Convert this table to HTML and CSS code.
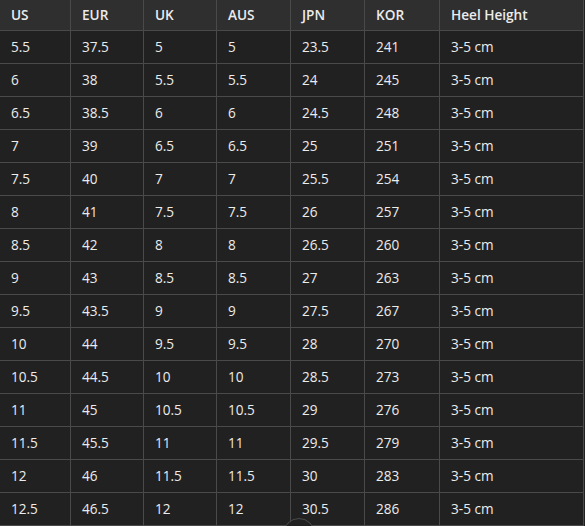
FILE: index.html
```html
<!DOCTYPE html>
<html>
<head>
<meta charset="utf-8">
<link rel="stylesheet" href="styles.css">
</head>
<body>
<div class="wrap">
<table class="sizes">
<colgroup>
<col class="c1"><col class="c2"><col class="c3"><col class="c4"><col class="c5"><col class="c6"><col class="c7">
</colgroup>
<thead>
<tr><th>US</th><th>EUR</th><th>UK</th><th>AUS</th><th>JPN</th><th>KOR</th><th>Heel Height</th></tr>
</thead>
<tbody>
<tr><td>5.5</td><td>37.5</td><td>5</td><td>5</td><td>23.5</td><td>241</td><td>3-5 cm</td></tr>
<tr><td>6</td><td>38</td><td>5.5</td><td>5.5</td><td>24</td><td>245</td><td>3-5 cm</td></tr>
<tr><td>6.5</td><td>38.5</td><td>6</td><td>6</td><td>24.5</td><td>248</td><td>3-5 cm</td></tr>
<tr><td>7</td><td>39</td><td>6.5</td><td>6.5</td><td>25</td><td>251</td><td>3-5 cm</td></tr>
<tr><td>7.5</td><td>40</td><td>7</td><td>7</td><td>25.5</td><td>254</td><td>3-5 cm</td></tr>
<tr><td>8</td><td>41</td><td>7.5</td><td>7.5</td><td>26</td><td>257</td><td>3-5 cm</td></tr>
<tr><td>8.5</td><td>42</td><td>8</td><td>8</td><td>26.5</td><td>260</td><td>3-5 cm</td></tr>
<tr><td>9</td><td>43</td><td>8.5</td><td>8.5</td><td>27</td><td>263</td><td>3-5 cm</td></tr>
<tr><td>9.5</td><td>43.5</td><td>9</td><td>9</td><td>27.5</td><td>267</td><td>3-5 cm</td></tr>
<tr><td>10</td><td>44</td><td>9.5</td><td>9.5</td><td>28</td><td>270</td><td>3-5 cm</td></tr>
<tr><td>10.5</td><td>44.5</td><td>10</td><td>10</td><td>28.5</td><td>273</td><td>3-5 cm</td></tr>
<tr><td>11</td><td>45</td><td>10.5</td><td>10.5</td><td>29</td><td>276</td><td>3-5 cm</td></tr>
<tr><td>11.5</td><td>45.5</td><td>11</td><td>11</td><td>29.5</td><td>279</td><td>3-5 cm</td></tr>
<tr><td>12</td><td>46</td><td>11.5</td><td>11.5</td><td>30</td><td>283</td><td>3-5 cm</td></tr>
<tr><td>12.5</td><td>46.5</td><td>12</td><td>12</td><td>30.5</td><td>286</td><td>3-5 cm</td></tr>
</tbody>
</table>
<div class="scroll-btn"></div>
</div>
</body>
</html>
```
FILE: styles.css
```css
html, body {
  margin: 0;
  padding: 0;
  background: #212121;
}
.wrap {
  position: relative;
  width: 585px;
  height: 526px;
  overflow: hidden;
}
.sizes {
  border-collapse: collapse;
  table-layout: fixed;
  width: 584px;
  font-family: "Open Sans", "Noto Sans", sans-serif;
  font-size: 13.6px;
  color: #ececec;
  margin-left: -1px;
  border-right: 1px solid #4a4a4a;
}
.c1 { width: 71px; }
.c2 { width: 73px; }
.c3 { width: 73px; }
.c4 { width: 74px; }
.c5 { width: 74px; }
.c6 { width: 75px; }
.c7 { width: 144px; }
.sizes th {
  background: #2f2f2f;
  font-weight: 600;
  text-align: left;
  height: 30px;
  padding: 0 0 0 11px;
  border-left: 1px solid #4a4a4a;
  border-bottom: 1px solid #4a4a4a;
  box-sizing: border-box;
}
.sizes td {
  background: #212121;
  height: 33px;
  padding: 0 0 0 11px;
  border-left: 1px solid #4a4a4a;
  border-bottom: 1px solid #4a4a4a;
  box-sizing: border-box;
}
.scroll-btn {
  position: absolute;
  left: 283px;
  top: 518px;
  width: 32px;
  height: 32px;
  border-radius: 50%;
  border: 1px solid #4a4a4a;
  background: #212121;
  box-sizing: border-box;
}
```
